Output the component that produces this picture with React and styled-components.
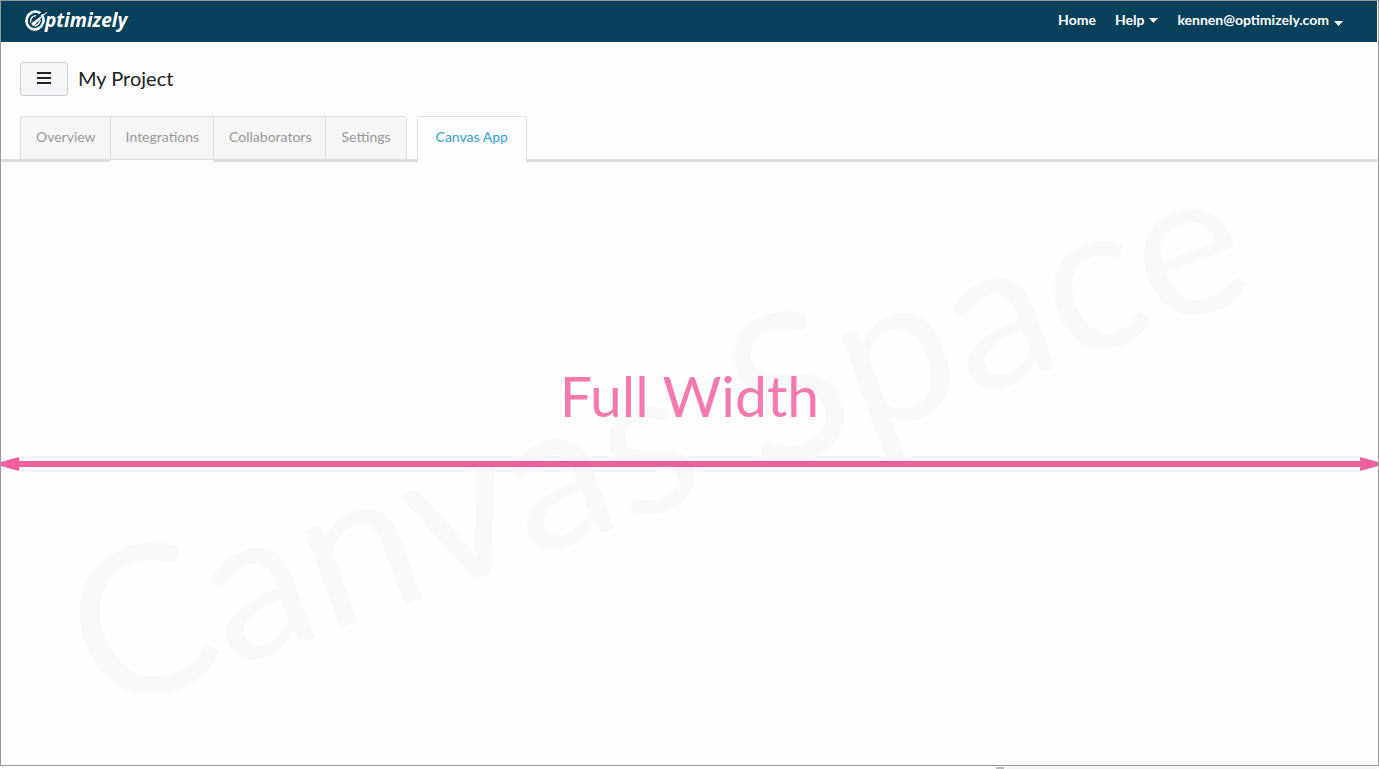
import React from "react";
import styled, { createGlobalStyle, css } from "styled-components";

const GlobalStyle = createGlobalStyle`
  * { box-sizing: border-box; }
  body {
    margin: 0;
    background: #fff;
    color: #222;
    font-family: Lato, "Liberation Sans", sans-serif;
    font-size: 14px;
    line-height: 20px;
  }
`;

const Page = styled.div`
  display: flex;
  flex-direction: column;
  min-height: 100vh;
`;

const Frame = styled.div`
  flex: 1;
  display: flex;
  flex-direction: column;
  border: 1px solid #999;
  background: #fefefe;
`;

const TopBar = styled.header`
  display: flex;
  align-items: center;
  justify-content: space-between;
  height: 41px;
  margin-right: 1px;
  padding: 0 34px 4px 24px;
  background: #06405b;
`;

const Logo = styled.a`
  display: flex;
  align-items: center;
  color: #fff;
  font: italic 700 19px/24px "Open Sans", sans-serif;
  text-decoration: none;
`;

const LogoMark = styled.svg`
  width: 22px;
  height: 22px;
  margin-right: -2px;
`;

const Links = styled.nav`
  display: flex;
  align-items: center;
  gap: 19px;
`;

const NavLink = styled.a`
  display: flex;
  align-items: center;
  gap: 5px;
  color: #fff;
  font-weight: 700;
  text-decoration: none;
`;

const Caret = styled.svg`
  width: 9px;
  height: 5px;
  margin-top: ${(p) => (p.$low ? "8px" : "2px")};
  fill: currentColor;
`;

const TitleRow = styled.div`
  display: flex;
  align-items: center;
  gap: 10px;
  padding: 20px 19px;
`;

const MenuButton = styled.button`
  display: flex;
  align-items: center;
  justify-content: center;
  width: 48px;
  height: 34px;
  padding: 0 0 2px;
  border: 1px solid #c8cdd8;
  border-radius: 3px;
  background: #f6f6f7;
  color: #222;
`;

const Title = styled.h1`
  margin: 0;
  padding-bottom: 3px;
  font-size: 20px;
  line-height: 24px;
  font-weight: 400;
`;

const Tabs = styled.nav`
  display: flex;
  align-items: flex-start;
  height: 46px;
  margin-right: 1px;
  padding-left: 19px;
  box-shadow: inset 0 -3px 0 #dedede;
`;

const Tab = styled.a`
  height: 43px;
  padding: 10px 14px 10px 15px;
  border: solid #dedede;
  border-width: 1px 0 0 1px;
  background: #f6f6f6;
  color: #999;
  text-decoration: none;

  &:first-child { border-top-left-radius: 3px; }

  ${(p) => p.$last && css`
    padding: 10px 15px;
    border-right-width: 1px;
    border-top-right-radius: 3px;
  `}

  ${(p) => p.$raised && css`
    height: 44px;
    border-bottom-width: 1px;
    box-shadow: 0 2px 0 #fefefe;
  `}

  ${(p) => p.$active && css`
    height: 46px;
    margin-left: 10px;
    padding: 10px 18px;
    border-width: 1px 1px 0;
    border-radius: 3px 3px 0 0;
    background: #fefefe;
    color: #2f9fd0;
  `}
`;

const Canvas = styled.main`
  position: relative;
  flex: 1;
  display: flex;
  flex-direction: column;
  padding-top: 197px;
`;

const Backdrop = styled.div`
  position: absolute;
  inset: 0;
  display: flex;
  align-items: center;
  justify-content: center;
  padding: 0 72px 68px 0;
`;

const Watermark = styled.span`
  color: #f9f9f9;
  font-size: 206px;
  line-height: 180px;
  white-space: nowrap;
  transform: rotate(-20deg);
`;

const Measure = styled.div`
  position: relative;
  display: flex;
  flex-direction: column;
  align-items: center;
  gap: 26px;
`;

const MeasureLabel = styled.p`
  margin: 0;
  color: #f579ae;
  font-size: 57px;
  line-height: 72px;
`;

const Arrow = styled.div`
  display: flex;
  align-items: center;
  align-self: stretch;
`;

const Shaft = styled.div`
  flex: 1;
  height: 6px;
  background: #ef609f;
`;

const Head = styled.svg`
  width: 18px;
  height: 14px;
  fill: #ef609f;
`;

const Strip = styled.div`
  display: flex;
  height: 3px;
  padding: 1px 2px 0 72%;
`;

const Thumb = styled.div`
  width: 8px;
  margin: 0 2px 0 3px;
  background: #bbb;
`;

const Track = styled.div`
  flex: 1;
  background: #f4f4f4;
`;

export default function App() {
  return (
    <Page>
      <GlobalStyle />
      <Frame>
        <TopBar>
          <Logo href="#">
            <LogoMark viewBox="0 0 22 22" aria-hidden="true">
              <ellipse
                cx="10"
                cy="11.5"
                rx="8.4"
                ry="9"
                transform="rotate(20 10 11.5)"
                fill="none"
                stroke="#fff"
                strokeWidth="2.6"
              />
              <path d="M12 8.2 20 1.4" stroke="#06405b" strokeWidth="2" />
              <path d="M5.4 13.5Q5.5 7 11 6.6" fill="none" stroke="#fff" strokeWidth="1.3" />
              <path d="M21.5 3.6 8.2 16.8 6.6 14.6z" fill="#fff" stroke="#fff" strokeWidth="0.8" />
              <path d="M9.5 17Q14 16 15.4 11" fill="none" stroke="#fff" strokeWidth="1.3" />
            </LogoMark>
            ptimizely
          </Logo>
          <Links>
            <NavLink href="#">Home</NavLink>
            <NavLink href="#">
              Help
              <Caret viewBox="0 0 9 5"><path d="M0 0h9L4.5 5z" /></Caret>
            </NavLink>
            <NavLink href="#">
              kennen@optimizely.com
              <Caret $low viewBox="0 0 9 5"><path d="M0 0h9L4.5 5z" /></Caret>
            </NavLink>
          </Links>
        </TopBar>
        <TitleRow>
          <MenuButton aria-label="Menu">
            <svg width="14" height="12" viewBox="0 0 14 12" fill="currentColor" aria-hidden="true">
              <path d="M0 0h14v2H0zM0 5h14v2H0zM0 10h14v2H0z" />
            </svg>
          </MenuButton>
          <Title>My Project</Title>
        </TitleRow>
        <Tabs>
          <Tab href="#">Overview</Tab>
          <Tab href="#" $raised>Integrations</Tab>
          <Tab href="#">Collaborators</Tab>
          <Tab href="#" $last>Settings</Tab>
          <Tab href="#" $active aria-current="page">Canvas App</Tab>
        </Tabs>
        <Canvas>
          <Backdrop>
            <Watermark>Canvas Space</Watermark>
          </Backdrop>
          <Measure>
            <MeasureLabel>Full Width</MeasureLabel>
            <Arrow>
              <Head viewBox="0 0 18 14"><path d="M0 5 18 0v14L0 9z" /></Head>
              <Shaft />
              <Head viewBox="0 0 18 14"><path d="M18 5 0 0v14l18-5z" /></Head>
            </Arrow>
          </Measure>
        </Canvas>
      </Frame>
      <Strip>
        <Thumb />
        <Track />
      </Strip>
    </Page>
  );
}
